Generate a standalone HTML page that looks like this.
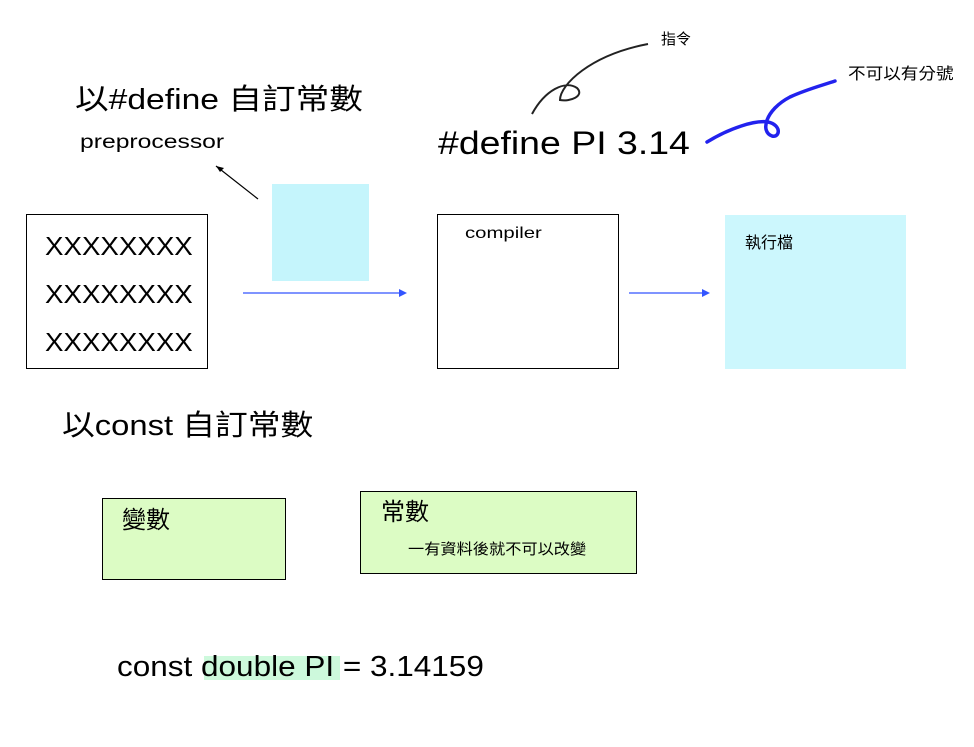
<!DOCTYPE html>
<html><head><meta charset="utf-8"><style>
body{margin:0;width:974px;height:747px;background:#fff;position:relative;overflow:hidden;font-family:"Liberation Sans","Noto Sans CJK TC",sans-serif;color:#000}
.a{position:absolute;white-space:nowrap;line-height:1;transform-origin:0 0}
.box{position:absolute;box-sizing:border-box}
</style></head><body>
<div class="a" style="left:75px;top:86px;font-size:29px;transform:scaleX(1.16)">以#define 自訂常數</div>
<div class="a" style="left:80px;top:133px;font-size:19px;transform:scaleX(1.3)">preprocessor</div>
<div class="a" style="left:438px;top:127px;font-size:32px;transform:scaleX(1.17)">#define PI 3.14</div>
<div class="a" style="left:661px;top:32px;font-size:15px">指令</div>
<div class="a" style="left:848px;top:67px;font-size:16px;transform:scaleX(1.1)">不可以有分號</div>
<svg class="a" style="left:0;top:0" width="974" height="747">
<path d="M532,114 C545,90 565,80 577,88 C585,96 570,102 560,100 C560,85 590,55 648,44" fill="none" stroke="#222" stroke-width="2"/>
<path d="M707,142 C730,128 755,120 768,122 C782,125 780,138 772,136 C760,132 765,110 790,97 C805,90 820,86 835,81" fill="none" stroke="#2222ee" stroke-width="3.5" stroke-linecap="round"/>
<line x1="258" y1="199" x2="216" y2="166" stroke="#000" stroke-width="1.2"/>
<path d="M216,166 l8,2 l-4,4z" fill="#000"/>
<line x1="243" y1="293" x2="402" y2="293" stroke="#3355ff" stroke-width="1.2"/>
<path d="M407,293 l-8,-4 v8z" fill="#3355ff"/>
<line x1="629" y1="293" x2="705" y2="293" stroke="#3355ff" stroke-width="1.2"/>
<path d="M710,293 l-8,-4 v8z" fill="#3355ff"/>
</svg>
<div class="box" style="left:26px;top:214px;width:182px;height:155px;border:1px solid #000"></div>
<div class="a" style="left:45px;top:222px;font-size:26px;line-height:48px;transform:scaleX(1.065)">XXXXXXXX<br>XXXXXXXX<br>XXXXXXXX</div>
<div class="box" style="left:272px;top:184px;width:97px;height:97px;background:#c5f5fc"></div>
<div class="box" style="left:437px;top:214px;width:182px;height:155px;border:1px solid #000"></div>
<div class="a" style="left:465px;top:226px;font-size:16px;transform:scaleX(1.27)">compiler</div>
<div class="box" style="left:725px;top:215px;width:181px;height:154px;background:#ccf7fd"></div>
<div class="a" style="left:745px;top:236px;font-size:16px">執行檔</div>
<div class="a" style="left:62px;top:412px;font-size:29px;transform:scaleX(1.13)">以const 自訂常數</div>
<div class="box" style="left:102px;top:498px;width:184px;height:82px;border:1px solid #000;background:#dcfcc4"></div>
<div class="a" style="left:122px;top:509px;font-size:24px">變數</div>
<div class="box" style="left:360px;top:491px;width:277px;height:83px;border:1px solid #000;background:#dcfcc4"></div>
<div class="a" style="left:381px;top:501px;font-size:24px">常數</div>
<div class="a" style="left:408px;top:542px;font-size:15px;transform:scaleX(1.08)">一有資料後就不可以改變</div>
<div class="box" style="left:204px;top:656px;width:136px;height:24px;background:#cdf9dc"></div>
<div class="a" style="left:117px;top:653px;font-size:29px;transform:scaleX(1.086)">const double PI = 3.14159</div>
</body></html>
